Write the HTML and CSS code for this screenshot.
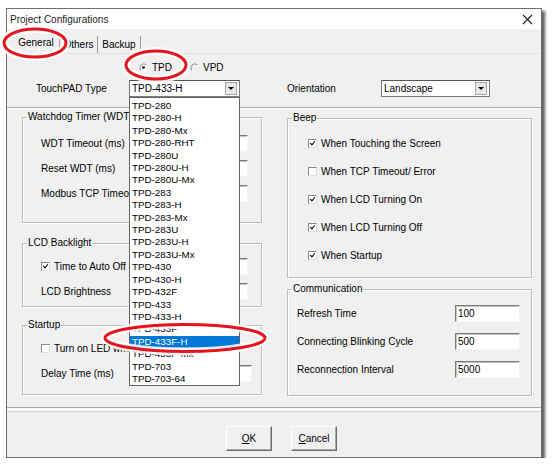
FILE: index.html
```html
<!DOCTYPE html>
<html lang="en">
<head>
    <meta charset="UTF-8">
    <title>Project Configurations</title>
    <link rel="stylesheet" href="styles.css">
</head>
<body>
    <div class="window">
        <div class="titlebar">
            <span class="title">Project Configurations</span>
            <svg class="close" width="11" height="11" viewBox="0 0 11 11"><path d="M1 1L10 10M10 1L1 10" stroke="#222" stroke-width="1.1"/></svg>
        </div>

        <div class="tabs">
            <div class="tab active">General</div>
            <div class="tab">Others</div>
            <div class="tab">Backup</div>
        </div>

        <div class="page">
            <div class="radio-row">
                <label class="radio">
                    <svg width="9" height="9" viewBox="0 0 9 9"><circle cx="4.5" cy="4.5" r="4" fill="#fff"/><path d="M1.7 7.3A4 4 0 0 1 7.3 1.7" fill="none" stroke="#8a8a8a"/><circle cx="4.5" cy="4.5" r="1.4" fill="#222"/></svg>
                    TPD
                </label>
                <label class="radio">
                    <svg width="9" height="9" viewBox="0 0 9 9"><path d="M1.7 7.3A4 4 0 0 1 7.3 1.7" fill="none" stroke="#8a8a8a"/></svg>
                    VPD
                </label>
            </div>

            <div class="type-row">
                <span class="type-label">TouchPAD Type</span>
                <div class="combo combo-type"><span>TPD-433-H</span><span class="arrow"></span></div>
                <span class="orient-label">Orientation</span>
                <div class="combo combo-orient"><span>Landscape</span><span class="arrow"></span></div>
            </div>

            <div class="hr"></div>

            <div class="columns">
                <div class="col col-left">
                    <fieldset class="group wdt">
                        <legend>Watchdog Timer (WDT)</legend>
                        <div class="group-body">
                            <div class="row"><span>WDT Timeout (ms)</span><span class="field"></span></div>
                            <div class="row"><span>Reset WDT (ms)</span><span class="field"></span></div>
                            <div class="row"><span>Modbus TCP Timeout (ms)</span><span class="field"></span></div>
                        </div>
                    </fieldset>

                    <fieldset class="group lcd">
                        <legend>LCD Backlight</legend>
                        <div class="group-body">
                            <div class="row"><span class="check on"></span><span>Time to Auto Off (s)</span><span class="field"></span></div>
                            <div class="row"><span>LCD Brightness</span><span class="field"></span></div>
                        </div>
                    </fieldset>

                    <fieldset class="group startup">
                        <legend>Startup</legend>
                        <div class="group-body">
                            <div class="row"><span class="check"></span><span>Turn on LED when Startup</span></div>
                            <div class="row"><span>Delay Time (ms)</span><span class="field"></span></div>
                        </div>
                    </fieldset>
                </div>

                <div class="col col-right">
                    <fieldset class="group beep">
                        <legend>Beep</legend>
                        <div class="group-body">
                            <div class="row tall"><span class="check on"></span><span>When Touching the Screen</span></div>
                            <div class="row tall"><span class="check"></span><span>When TCP Timeout/ Error</span></div>
                            <div class="row tall"><span class="check on"></span><span>When LCD Turning On</span></div>
                            <div class="row tall"><span class="check on"></span><span>When LCD Turning Off</span></div>
                            <div class="row tall"><span class="check on"></span><span>When Startup</span></div>
                        </div>
                    </fieldset>

                    <fieldset class="group comm">
                        <legend>Communication</legend>
                        <div class="group-body">
                            <div class="row tall"><span>Refresh Time</span><span class="field">100</span></div>
                            <div class="row tall"><span>Connecting Blinking Cycle</span><span class="field">500</span></div>
                            <div class="row tall"><span>Reconnection Interval</span><span class="field">5000</span></div>
                        </div>
                    </fieldset>
                </div>
            </div>
        </div>

        <div class="divider"></div>

        <div class="footer">
            <button class="btn"><u>O</u>K</button>
            <button class="btn"><u>C</u>ancel</button>
        </div>

        <ul class="droplist">
            <li>TPD-280</li>
            <li>TPD-280-H</li>
            <li>TPD-280-Mx</li>
            <li>TPD-280-RHT</li>
            <li>TPD-280U</li>
            <li>TPD-280U-H</li>
            <li>TPD-280U-Mx</li>
            <li>TPD-283</li>
            <li>TPD-283-H</li>
            <li>TPD-283-Mx</li>
            <li>TPD-283U</li>
            <li>TPD-283U-H</li>
            <li>TPD-283U-Mx</li>
            <li>TPD-430</li>
            <li>TPD-430-H</li>
            <li>TPD-432F</li>
            <li>TPD-433</li>
            <li>TPD-433-H</li>
            <li>TPD-433F</li>
            <li class="selected">TPD-433F-H</li>
            <li>TPD-433F-Mx</li>
            <li>TPD-703</li>
            <li>TPD-703-64</li>
        </ul>
    </div>

    <!-- red annotation marks -->
    <svg class="marks" width="553" height="470" viewBox="0 0 553 470">
        <g fill="none" stroke="#fff" stroke-width="8" opacity="0.85">
            <ellipse cx="35" cy="43" rx="31" ry="14"/>
            <ellipse cx="156" cy="65" rx="30" ry="14"/>
            <ellipse cx="185" cy="338" rx="80" ry="13.5"/>
        </g>
        <g fill="none" stroke="#e3141e" stroke-width="3">
            <ellipse cx="35" cy="43" rx="31" ry="14"/>
            <ellipse cx="156" cy="65" rx="30" ry="14"/>
            <ellipse cx="185" cy="338" rx="80" ry="13.5"/>
        </g>
    </svg>
</body>
</html>
```

FILE: styles.css
```css
body {
    margin: 0;
    background-color: #fff;
    font-family: "Liberation Sans", Arial, sans-serif;
    font-size: 10px;
    color: #000;
}

.window {
    position: relative;
    margin: 8px 0 0 6px;
    width: 536px;
    height: 450px;
    box-sizing: border-box;
    border: 1px solid #6e6e6e;
    background-color: #f0f0f0;
    box-shadow: 3px 3px 3px rgba(0, 0, 0, 0.65);
}

.titlebar {
    display: flex;
    align-items: center;
    justify-content: space-between;
    height: 20px;
    padding: 0 8px 0 3px;
    background-color: #fff;
}

.title {
    color: #222;
}

.tabs {
    display: flex;
    align-items: flex-end;
    height: 24px;
    padding-left: 6px;
}

.tab {
    height: 17px;
    line-height: 17px;
    text-align: center;
    border-right: 1px solid #9a9a9a;
    box-sizing: border-box;
}

.tab:nth-child(1) {
    width: 47px;
}

.tab:nth-child(2) {
    width: 38px;
}

.tab:nth-child(3) {
    width: 43px;
}

.tab.active {
    height: 20px;
    line-height: 19px;
}

.page {
    height: 355px;
    box-sizing: border-box;
    border-top: 1px solid #e2e2e2;
    border-bottom: 1px solid #a8a8a8;
}

.radio-row {
    display: flex;
    align-items: center;
    height: 14px;
    margin-top: 6px;
    padding-left: 132px;
}

.radio {
    display: flex;
    align-items: center;
    gap: 4px;
    margin-right: 18px;
}

.type-row {
    display: flex;
    align-items: center;
    height: 17px;
    margin-top: 6px;
    padding-left: 29px;
}

.type-label {
    width: 93px;
}

.orient-label {
    width: 94px;
    margin-left: 47px;
}

.combo {
    display: flex;
    align-items: center;
    justify-content: space-between;
    height: 17px;
    box-sizing: border-box;
    padding: 0 2px 0 2px;
    background-color: #fff;
    border: 1px solid #7a7a7a;
    border-top-color: #555;
}

.combo-type {
    width: 111px;
}

.combo-orient {
    width: 109px;
}

.combo .arrow {
    display: flex;
    align-items: center;
    justify-content: center;
    width: 12px;
    height: 13px;
    box-sizing: border-box;
    background-color: #e8e8e8;
    border: 1px solid #a8a8a8;
}

.combo .arrow::after {
    content: "";
    border-left: 3px solid transparent;
    border-right: 3px solid transparent;
    border-top: 3px solid #000;
}

.hr {
    margin-top: 10px;
    border-top: 1px solid #a8a8a8;
    border-bottom: 1px solid #fff;
}

.columns {
    display: flex;
    gap: 25px;
    margin-top: 2px;
    padding-left: 15px;
}

.col-left {
    width: 240px;
}

.col-right {
    width: 245px;
}

.group {
    margin: 0;
    padding: 0;
    min-width: 0;
    box-sizing: border-box;
    border: 1px solid #bdbdbd;
    box-shadow: inset 1px 1px 0 #fff, 1px 1px 0 #fff;
}

.group legend {
    margin-left: 4px;
    padding: 0 1px;
    line-height: 12px;
}

.group-body {
    padding: 5px 13px 0 18px;
}

.row {
    display: flex;
    align-items: center;
    height: 25px;
    white-space: nowrap;
}

.row.tall {
    height: 28px;
}

.field {
    flex: none;
    width: 70px;
    height: 17px;
    margin-left: auto;
    box-sizing: border-box;
    padding-left: 2px;
    line-height: 15px;
    background-color: #fff;
    border: 1px solid;
    border-color: #7a7a7a #f4f4f4 #f4f4f4 #7a7a7a;
    box-shadow: inset 1px 1px 0 #c4c4c4;
}

.check {
    display: inline-block;
    flex: none;
    width: 9px;
    height: 9px;
    margin-right: 4px;
    box-sizing: border-box;
    background-color: #fff;
    border: 1px solid;
    border-color: #8a8a8a #e0e0e0 #e0e0e0 #8a8a8a;
    position: relative;
}

.check.on::after {
    content: "";
    position: absolute;
    left: 2px;
    top: 0;
    width: 2px;
    height: 4px;
    border: solid #000;
    border-width: 0 1.5px 1.5px 0;
    transform: rotate(40deg);
}

.wdt {
    height: 112px;
}

.wdt .group-body {
    padding-top: 8px;
}

.lcd {
    height: 70px;
    margin-top: 14px;
}

.startup {
    height: 76px;
    margin-top: 12px;
}

.startup .group-body {
    padding-right: 9px;
}

.beep {
    height: 166px;
    margin-top: 1px;
}

.beep .group-body {
    padding-left: 20px;
}

.comm {
    height: 113px;
    margin-top: 5px;
}

.comm .group-body {
    padding: 4px 11px 0 9px;
}

.comm .field {
    width: 65px;
}

.divider {
    height: 3px;
    background-color: #fafafa;
    border-bottom: 1px solid #d6d6d6;
}

.footer {
    display: flex;
    gap: 19px;
    padding: 14px 0 0 219px;
}

.btn {
    width: 46px;
    height: 25px;
    padding: 0;
    font-family: inherit;
    font-size: 10px;
    color: #000;
    background-color: #f0f0f0;
    border: 1px solid;
    border-color: #fff #6d6d6d #6d6d6d #fff;
    box-shadow: inset -1px -1px 0 #a8a8a8;
}

.droplist {
    position: absolute;
    left: 122px;
    top: 88px;
    width: 111px;
    margin: 0;
    padding: 2px 0 0 0;
    height: 289px;
    box-sizing: border-box;
    list-style: none;
    background-color: #fff;
    border: 1px solid #646464;
    font-size: 9.8px;
}

.droplist li {
    height: 12.41px;
    line-height: 12.41px;
    padding-left: 2px;
    white-space: nowrap;
}

.droplist li.selected {
    background-color: #0078d7;
    color: #fff;
}

.marks {
    position: absolute;
    left: 0;
    top: 0;
    pointer-events: none;
}
```
